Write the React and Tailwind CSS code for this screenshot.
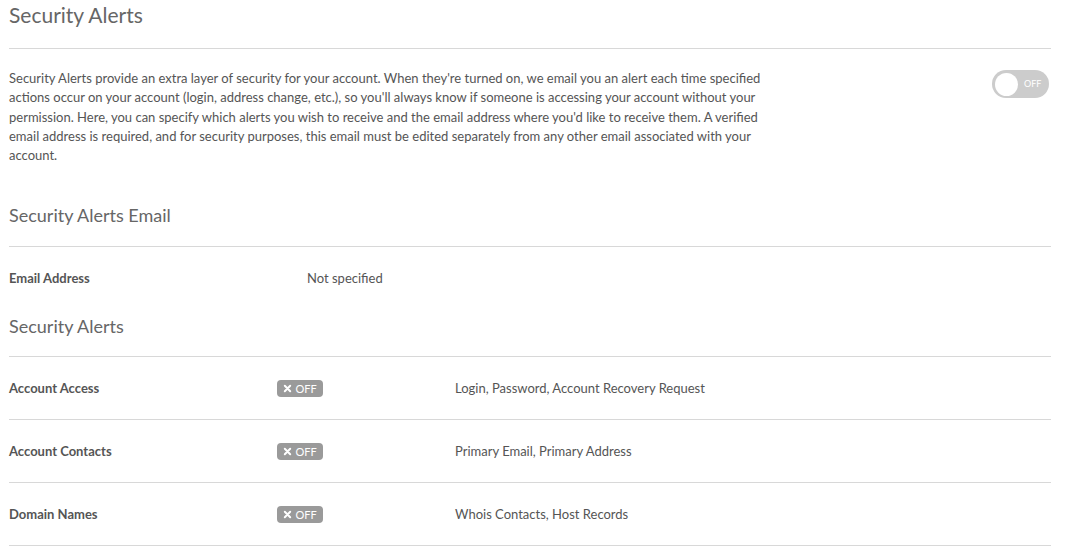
import React from "react";

const alerts = [
  { name: "Account Access", desc: "Login, Password, Account Recovery Request" },
  { name: "Account Contacts", desc: "Primary Email, Primary Address" },
  { name: "Domain Names", desc: "Whois Contacts, Host Records" },
];

const OffBadge = () => (
  <span className="inline-flex items-center gap-[3px] h-[17px] w-[46px] justify-center rounded-[4px] bg-[#9a9a9a] text-white text-[11px] leading-none">
    <svg width="9" height="9" viewBox="0 0 10 10">
      <path d="M2 2 L8 8 M8 2 L2 8" stroke="white" strokeWidth="2.2" strokeLinecap="round" />
    </svg>
    OFF
  </span>
);

const App = () => {
  return (
    <div className="min-h-screen bg-white pl-[9px] pr-[16px] font-['Lato','Open_Sans',sans-serif] text-[#555]">
      <div className="border-b border-[#d8d8d8] pb-[19px]">
        <h1 className="text-[21px] leading-[29px] text-[#666] font-normal">Security Alerts</h1>
      </div>

      <div className="flex justify-between mt-[20px]">
        <p className="w-[778px] text-[13px] leading-[19.3px]">
          Security Alerts provide an extra layer of security for your account. When they're turned on, we email you an alert each time specified
          actions occur on your account (login, address change, etc.), so you'll always know if someone is accessing your account without your
          permission. Here, you can specify which alerts you wish to receive and the email address where you'd like to receive them. A verified
          email address is required, and for security purposes, this email must be edited separately from any other email associated with your
          account.
        </p>
        <button className="mt-[1px] mr-[2px] flex items-center h-[28px] w-[57px] rounded-full bg-[#cccccc] pl-[3px]">
          <span className="h-[23px] w-[23px] rounded-full bg-white"></span>
          <span className="ml-[6px] text-[9px] text-white">OFF</span>
        </button>
      </div>

      <div className="mt-[38px] border-b border-[#d8d8d8] pb-[19px]">
        <h2 className="text-[18px] leading-[24px] text-[#666] font-normal">Security Alerts Email</h2>
      </div>
      <div className="flex pt-[21px] text-[13px] leading-[20px]">
        <span className="w-[298px] font-bold">Email Address</span>
        <span>Not specified</span>
      </div>

      <div className="mt-[26px] border-b border-[#d8d8d8] pb-[18px]">
        <h2 className="text-[18px] leading-[24px] text-[#666] font-normal">Security Alerts</h2>
      </div>
      {alerts.map((a) => (
        <div key={a.name} className="flex items-center py-[21px] border-b border-[#d8d8d8] text-[13px] leading-[20px]">
          <span className="w-[268px] font-bold">{a.name}</span>
          <span className="w-[178px]">
            <OffBadge />
          </span>
          <span>{a.desc}</span>
        </div>
      ))}
    </div>
  );
};

export default App;
